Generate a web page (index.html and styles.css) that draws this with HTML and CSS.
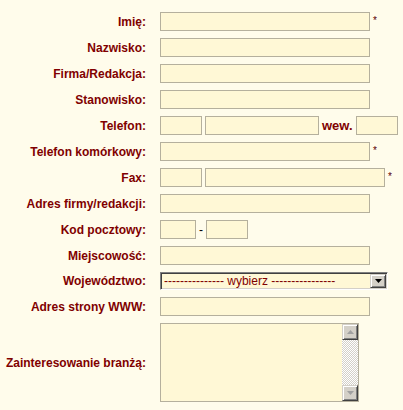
FILE: index.html
```html
<!DOCTYPE html>
<html lang="pl">
<head>
  <title>Formularz zgłoszeniowy</title>
  <meta charset="utf-8">
  <meta name="viewport" content="width=device-width, initial-scale=1">
  <link rel="stylesheet" href="styles.css">
</head>
<body>
  <form class="form">
    <label class="label" for="imie">Imię:</label>
    <div class="field">
      <input class="input input-wide" id="imie" type="text">
      <span class="req">*</span>
    </div>

    <label class="label" for="nazwisko">Nazwisko:</label>
    <div class="field">
      <input class="input input-wide" id="nazwisko" type="text">
    </div>

    <label class="label" for="firma">Firma/Redakcja:</label>
    <div class="field">
      <input class="input input-wide" id="firma" type="text">
    </div>

    <label class="label" for="stanowisko">Stanowisko:</label>
    <div class="field">
      <input class="input input-wide" id="stanowisko" type="text">
    </div>

    <label class="label" for="telefon">Telefon:</label>
    <div class="field">
      <input class="input input-short" id="telefon" type="text">
      <input class="input input-mid" type="text">
      <span class="label-inline">wew.</span>
      <input class="input input-short" type="text">
    </div>

    <label class="label" for="komorka">Telefon komórkowy:</label>
    <div class="field">
      <input class="input input-wide" id="komorka" type="text">
      <span class="req">*</span>
    </div>

    <label class="label" for="fax">Fax:</label>
    <div class="field">
      <input class="input input-short" id="fax" type="text">
      <input class="input input-fax" type="text">
      <span class="req">*</span>
    </div>

    <label class="label" for="adres">Adres firmy/redakcji:</label>
    <div class="field">
      <input class="input input-wide" id="adres" type="text">
    </div>

    <label class="label" for="kod">Kod pocztowy:</label>
    <div class="field">
      <input class="input input-zip" id="kod" type="text">
      <span class="dash">-</span>
      <input class="input input-short" type="text">
    </div>

    <label class="label" for="miasto">Miejscowość:</label>
    <div class="field">
      <input class="input input-wide" id="miasto" type="text">
    </div>

    <label class="label" for="woj">Województwo:</label>
    <div class="field">
      <div class="select-wrap">
        <select class="select" id="woj">
          <option>--------------- wybierz ----------------</option>
          <option>dolnośląskie</option>
          <option>kujawsko-pomorskie</option>
          <option>lubelskie</option>
          <option>lubuskie</option>
          <option>łódzkie</option>
          <option>małopolskie</option>
          <option>mazowieckie</option>
        </select>
        <span class="select-button">
          <svg class="arrow" viewBox="0 0 7 4" aria-hidden="true"><polygon points="0,0 7,0 3.5,4"/></svg>
        </span>
      </div>
    </div>

    <label class="label" for="www">Adres strony WWW:</label>
    <div class="field">
      <input class="input input-wide" id="www" type="text">
    </div>

    <label class="label" for="branza">Zainteresowanie branżą:</label>
    <div class="field">
      <div class="textarea-wrap">
        <textarea class="textarea" id="branza"></textarea>
        <div class="scrollbar" aria-hidden="true">
          <span class="scroll-button">
            <svg class="arrow arrow-off" viewBox="0 0 7 4"><polygon points="0,4 7,4 3.5,0"/></svg>
          </span>
          <span class="scroll-track"></span>
          <span class="scroll-button">
            <svg class="arrow arrow-off" viewBox="0 0 7 4"><polygon points="0,0 7,0 3.5,4"/></svg>
          </span>
        </div>
      </div>
    </div>
  </form>
</body>
</html>
```

FILE: styles.css
```css
html {
  font-size: 12px;
}

body {
  margin: 0;
  padding: 12px 0 0;
  background-color: #FFFCEB;
  color: #800000;
  font-family: "Liberation Sans", Arial, sans-serif;
}

.form {
  display: grid;
  grid-template-columns: 146px auto;
  justify-content: start;
  column-gap: 14px;
  row-gap: 7px;
}

.label {
  align-self: center;
  font-size: 12px;
  font-weight: bold;
  line-height: 14px;
  text-align: right;
}

.field {
  display: flex;
  align-items: center;
  gap: 3px;
}

.input {
  box-sizing: border-box;
  height: 19px;
  margin: 0;
  padding: 0 2px;
  border: 1px solid #B5B09D;
  background-color: #FFF8D6;
  color: #800000;
  font-family: inherit;
  font-size: 12px;
  outline: none;
}

.input-wide {
  width: 210px;
}

.input-short {
  width: 42px;
}

.input-mid {
  width: 114px;
}

.input-fax {
  width: 180px;
}

.input-zip {
  width: 36px;
}

.req {
  align-self: flex-start;
  padding-top: 4px;
  color: #5A0000;
  font-size: 10px;
  line-height: 10px;
}

.label-inline {
  font-size: 13px;
  font-weight: bold;
}

.dash {
  color: #000000;
  font-size: 12px;
}

.select-wrap {
  position: relative;
  width: 228px;
  height: 18px;
}

.select {
  -webkit-appearance: none;
  appearance: none;
  box-sizing: border-box;
  width: 100%;
  height: 100%;
  margin: 0;
  padding: 0 0 0 3px;
  border: 1px solid;
  border-color: #808080 #FFFFFF #FFFFFF #808080;
  border-radius: 0;
  box-shadow: inset 1px 1px #404040, inset -1px -1px #D4D0C8;
  background-color: #FFF8D6;
  color: #800000;
  font-family: inherit;
  font-size: 12px;
  outline: none;
}

.select-button {
  position: absolute;
  top: 2px;
  right: 2px;
  box-sizing: border-box;
  display: flex;
  align-items: center;
  justify-content: center;
  width: 16px;
  height: 14px;
  border: 1px solid;
  border-color: #D4D0C8 #404040 #404040 #D4D0C8;
  box-shadow: inset 1px 1px #FFFFFF, inset -1px -1px #808080;
  background-color: #D4D0C8;
  pointer-events: none;
}

.arrow {
  width: 7px;
  height: 4px;
  fill: #000000;
}

.arrow-off {
  fill: #A0A0A0;
}

.textarea-wrap {
  box-sizing: border-box;
  display: flex;
  width: 199px;
  height: 79px;
  border: 1px solid #B5B09D;
  background-color: #FFF8D6;
}

.textarea {
  flex: 1;
  margin: 0;
  padding: 2px;
  border: 0;
  background: transparent;
  color: #800000;
  font-family: inherit;
  font-size: 12px;
  resize: none;
  outline: none;
}

.scrollbar {
  display: flex;
  flex-direction: column;
  width: 16px;
}

.scroll-button {
  box-sizing: border-box;
  display: flex;
  align-items: center;
  justify-content: center;
  height: 16px;
  border: 1px solid;
  border-color: #D4D0C8 #404040 #404040 #D4D0C8;
  box-shadow: inset 1px 1px #FFFFFF, inset -1px -1px #808080;
  background-color: #D4D0C8;
}

.scroll-track {
  flex: 1;
  background-color: #FFFFFF;
  background-image: repeating-conic-gradient(#D4D0C8 0 25%, #FFFFFF 0 50%);
  background-size: 2px 2px;
}
```
